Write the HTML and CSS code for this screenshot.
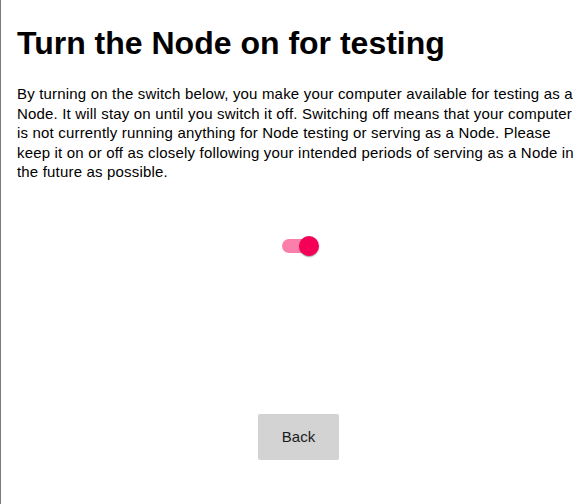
FILE: index.html
```html
<!DOCTYPE html>
<html>
<head>
<meta charset="utf-8">
<link rel="stylesheet" href="styles.css">
</head>
<body>
<div class="page">
  <h1 class="title">Turn the Node on for testing</h1>
  <p class="intro">By turning on the switch below, you make your computer available for testing as a Node. It will stay on until you switch it off. Switching off means that your computer is not currently running anything for Node testing or serving as a Node. Please keep it on or off as closely following your intended periods of serving as a Node in the future as possible.</p>
  <div class="switch-row">
    <span class="switch">
      <span class="track"></span>
      <span class="thumb"></span>
    </span>
  </div>
  <div class="actions">
    <button class="back">Back</button>
  </div>
</div>
</body>
</html>
```

FILE: styles.css
```css
html, body {
  margin: 0;
  padding: 0;
  height: 100%;
  background: #fff;
}
body {
  border-left: 1px solid #7a7a7a;
  box-sizing: border-box;
  font-family: "Liberation Sans", Arial, sans-serif;
  color: #000;
}
.page {
  padding: 25px 5px 0 16px;
  display: flex;
  flex-direction: column;
}
.title {
  margin: 0;
  font-size: 32px;
  line-height: 37px;
  font-weight: bold;
}
.intro {
  margin: 22px 0 0 0;
  font-size: 15px;
  line-height: 19.5px;
  letter-spacing: 0.18px;
}
.switch-row {
  display: flex;
  justify-content: center;
  margin-top: 45px;
}
.switch {
  position: relative;
  width: 58px;
  height: 38px;
  padding: 12px;
  box-sizing: border-box;
  display: inline-block;
}
.track {
  display: block;
  width: 34px;
  height: 14px;
  border-radius: 7px;
  background: #f50057;
  opacity: 0.5;
}
.thumb {
  position: absolute;
  top: 9px;
  left: 29px;
  width: 20px;
  height: 20px;
  border-radius: 50%;
  background: #f50057;
  box-shadow: 0 2px 1px -1px rgba(0,0,0,0.2), 0 1px 1px 0 rgba(0,0,0,0.14), 0 1px 3px 0 rgba(0,0,0,0.12);
}
.actions {
  display: flex;
  justify-content: center;
  margin-top: 149px;
}
.back {
  width: 81px;
  height: 46px;
  border: none;
  border-radius: 2px;
  background: #d3d3d3;
  font-family: "Liberation Sans", Arial, sans-serif;
  font-size: 15px;
  color: #1a1a1a;
  padding: 0;
}
```
